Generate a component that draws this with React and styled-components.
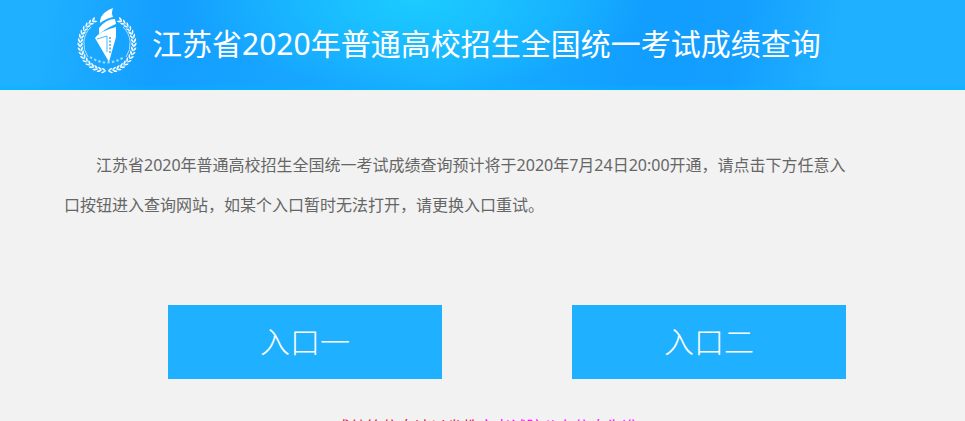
import React from "react";
import styled, { createGlobalStyle } from "styled-components";

const GlobalStyle = createGlobalStyle`
  * { box-sizing: border-box; }
  html, body { margin: 0; background: #f2f2f2; }
  body {
    font-family: "Noto Sans", "Noto Sans CJK SC", sans-serif;
    color: #666;
  }
  html { height: 100%; overflow: hidden; }
`;

const Header = styled.header`
  display: flex;
  align-items: center;
  gap: 14px;
  height: 90px;
  padding: 0 76px 8px;
  background:
    linear-gradient(to top, #00b4ff99 0, #00b4ff00 6px),
    radial-gradient(ellipse 230px 90px at 43% 0, #1bcbff 0, #1bcbff00 100%),
    linear-gradient(100deg, #1fb1ff 0, #1fb1ff 4%, #149eff 17%, #17a6ff 33%, #18b0ff 46%, #129eff 66%, #149fff 76%, #1fb0ff 86%, #1fb1ff 100%);
`;

const Logo = styled.svg`
  flex: none;
  width: 62px;
  height: 66px;
`;

const Title = styled.h1`
  margin: 0;
  padding-top: 6px;
  font-size: 30px;
  font-weight: 400;
  line-height: 40px;
  color: #fff;
  white-space: nowrap;
`;

const Main = styled.main`
  padding: 55px 112px 0 64px;
`;

const Notice = styled.p`
  margin: 0;
  font-size: 16px;
  font-weight: 400;
  line-height: 40px;
  text-indent: 2em;
`;

const Entries = styled.nav`
  display: flex;
  justify-content: space-between;
  padding: 80px 7px 0 104px;
`;

const Entry = styled.a`
  display: block;
  width: 274px;
  line-height: 74px;
  background: #1fb1ff;
  color: #fff;
  font-size: 30px;
  font-weight: 300;
  text-align: center;
  text-decoration: none;
`;

const Tip = styled.p`
  margin: 36px 0 0;
  padding-left: 8px;
  font-size: 16px;
  line-height: 24px;
  text-align: center;
  color: #d8104c;
  white-space: nowrap;
`;

const TipAccent = styled.span`
  color: #f0f;
`;

const leafAngles = Array.from({ length: 17 }, (_, i) => 6 + i * 9);

function Wreath() {
  return leafAngles.map((a) => (
    <g key={a}>
      {[-1, 1].map((side) => (
        <g key={side} transform={`translate(31 36) scale(${side} 1) rotate(${-a}) translate(0 27)`}>
          <path d="M-2 0Q0 -3.4 3 -2.6Q1.4 .2 -2 0Z" />
          <path d="M-2 0Q1 3.4 3 2.2Q1.4 -.4 -2 0Z" />
        </g>
      ))}
    </g>
  ));
}

function Emblem() {
  return (
    <Logo viewBox="0 0 62 66" fill="#fff" role="img" aria-label="徽标">
      <Wreath />
      <path d="M15 19A23 23 0 0 0 12 49M47 19A23 23 0 0 1 50 49" fill="none" stroke="#b4e2ff" strokeWidth="1" />
      <path d="M14 49Q31 60 48 49" fill="none" stroke="#a0dcff" strokeWidth="2" strokeDasharray="2.4 2.2" />
      <path d="M24 13Q25 4 37 0Q35 5 37 9Q31 10 24 15Z" />
      <path d="M23 20Q30 11 39 11L40 16Q34 18 23 26Z" />
      <path d="M19 30Q24 23 40 19L40 29L33 54Z" />
      <path d="M21 31L31 28L31 44" fill="none" stroke="#43b9fb" strokeWidth="1" />
      <path d="M34 29V46" fill="none" stroke="#75bfd8" strokeWidth="2" strokeDasharray="2 1.5" />
    </Logo>
  );
}

export default function App() {
  return (
    <>
      <GlobalStyle />
      <Header>
        <Emblem />
        <Title>江苏省2020年普通高校招生全国统一考试成绩查询</Title>
      </Header>
      <Main>
        <Notice>
          江苏省2020年普通高校招生全国统一考试成绩查询预计将于2020年7月24日20:00开通，请点击下方任意入口按钮进入查询网站，如某个入口暂时无法打开，请更换入口重试。
        </Notice>
        <Entries>
          <Entry href="#entry-1">入口一</Entry>
          <Entry href="#entry-2">入口二</Entry>
        </Entries>
      </Main>
      <Tip>成绩等信息请以省教<TipAccent>育考试院公布信息为准</TipAccent></Tip>
    </>
  );
}
